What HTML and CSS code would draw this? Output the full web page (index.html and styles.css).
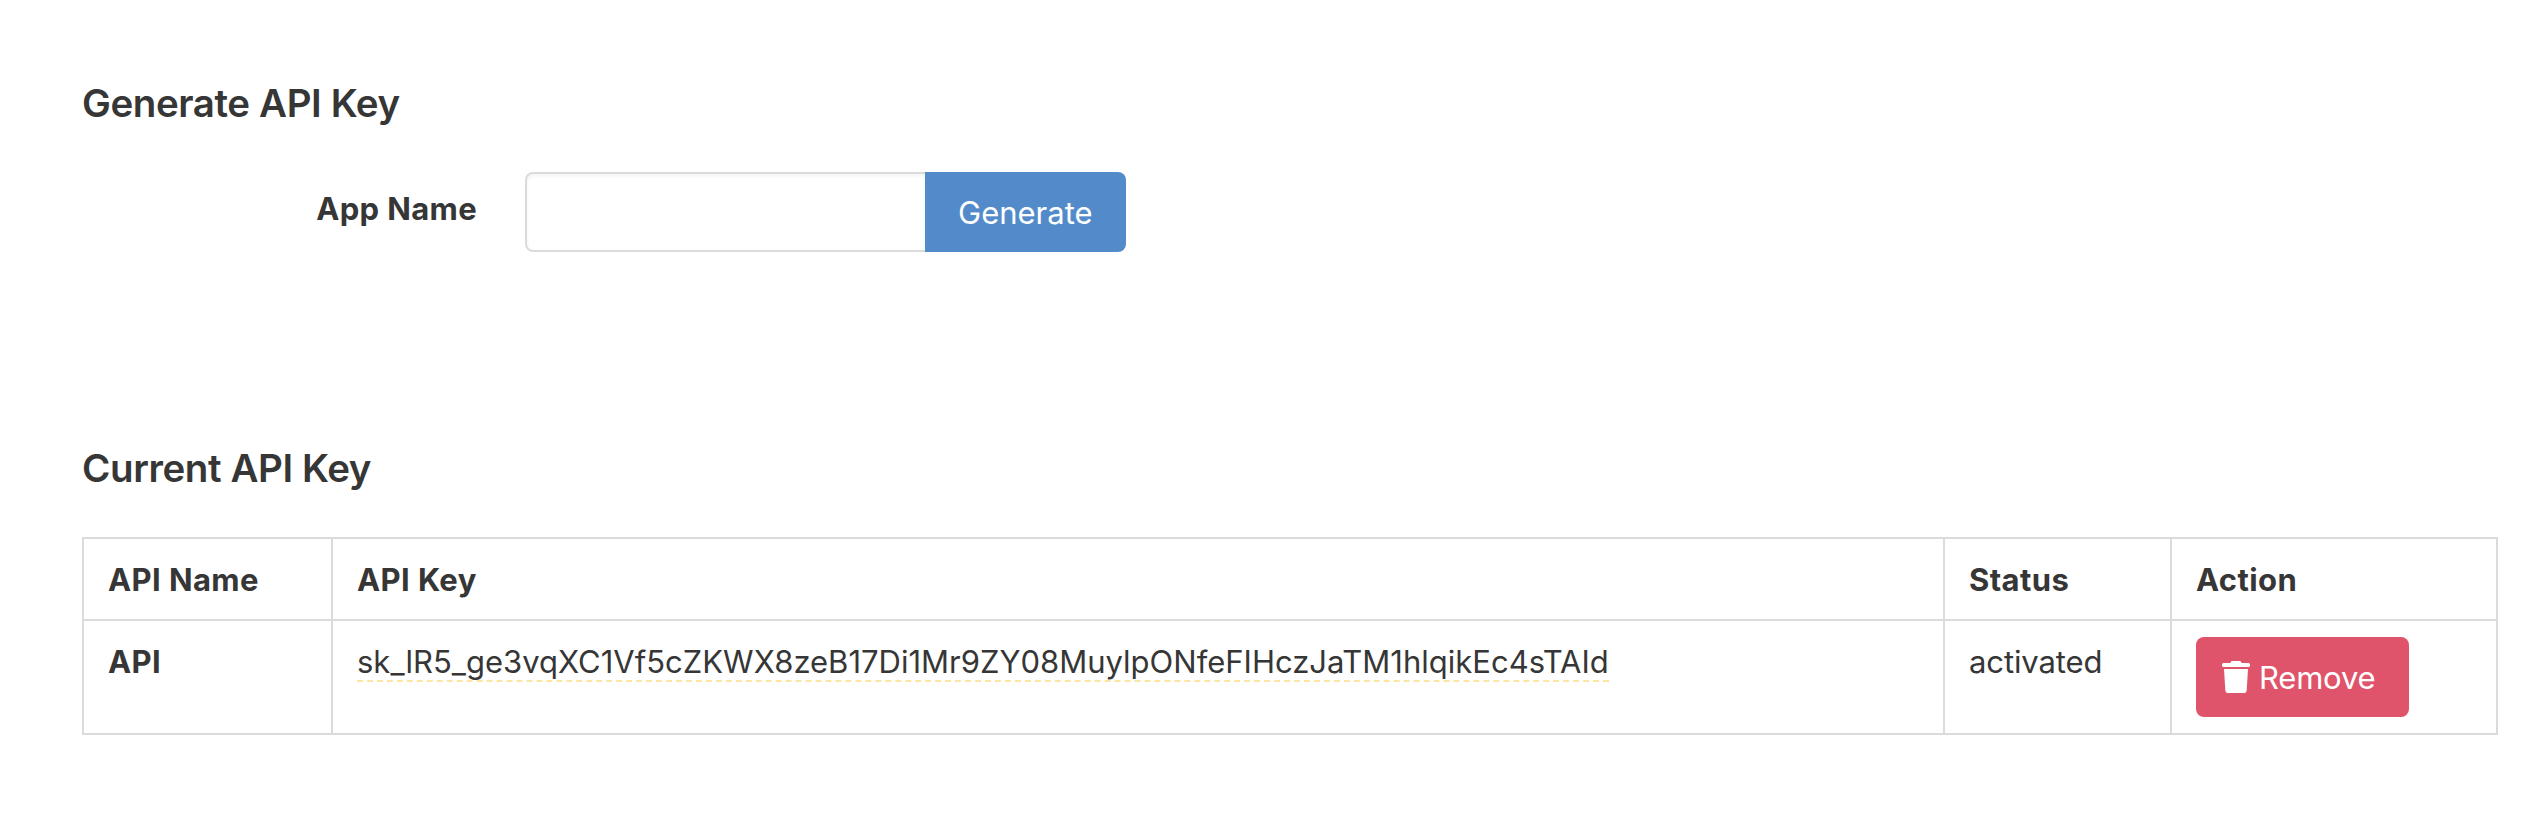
FILE: index.html
```html
<!DOCTYPE html>
<html lang="en">
<head>
<meta charset="utf-8">
<title>API Key</title>
<link rel="stylesheet" href="styles.css">
</head>
<body>
<main class="page">
  <section class="generate">
    <h2 class="title">Generate API Key</h2>
    <form class="field">
      <label class="label" for="app">App Name</label>
      <div class="addons">
        <input class="input" id="app" type="text">
        <button class="button primary" type="button"><span class="generate-text">Generate</span></button>
      </div>
    </form>
  </section>
  <section class="current">
    <h2 class="title">Current API Key</h2>
    <table class="table">
      <colgroup><col class="c-name"><col class="c-key"><col class="c-status"><col class="c-action"></colgroup>
      <thead>
        <tr><th>API Name</th><th>API Key</th><th>Status</th><th>Action</th></tr>
      </thead>
      <tbody>
        <tr class="row">
          <th>API</th>
          <td><span class="key">sk_lR5_ge3vqXC1Vf5cZKWX8zeB17Di1Mr9ZY08MuylpONfeFIHczJaTM1hlqikEc4sTAId</span></td>
          <td><span class="status">activated</span></td>
          <td><button class="button danger" type="button"><svg class="trash" viewBox="0 0 28 32" width="28" height="32"><path fill="#fff" d="M1.5 2H8.3L8.9.8Q9.3 0 10.2 0H17.800Q18.700 0 19.100.8L19.700 2H26.500Q28 2 28 3.500V4.500Q28 6 26.500 6H1.500Q0 6 0 4.500V3.500Q0 2 1.500 2ZM2 8H26L24.700 29.200Q24.500 32 21.700 32H6.300Q3.500 32 3.300 29.200Z"/></svg><span class="remove-text">Remove</span></button></td>
        </tr>
      </tbody>
    </table>
  </section>
</main>
</body>
</html>
```
FILE: styles.css
```css
* { box-sizing: border-box; }
body {
  margin: 0;
  background: #fff;
  color: #363636;
  font-family: Inter, "Liberation Sans", sans-serif;
  font-size: 31px;
  line-height: 48px;
}
.page { padding: 80px 28px 0 82px; }
.title { margin: 0; font-size: 38.5px; font-weight: 600; line-height: 46px; letter-spacing: -0.4px; }
.generate { height: 365px; }
.field { display: flex; margin-top: 46px; }
.label { width: 395px; padding-top: 13px; text-align: right; font-weight: 700; letter-spacing: 0.35px; }
.addons { display: flex; margin-left: 48px; }
.input {
  width: 400px; height: 80px; padding: 0 20px;
  border: 2px solid #dbdbdb; border-right: 0; border-radius: 8px 0 0 8px;
  background: #fff; box-shadow: inset 0 2px 4px rgba(10, 10, 10, .05);
  font: inherit; outline: 0;
}
.button {
  display: flex; align-items: center; height: 80px; padding: 0; border: 0;
  color: #fff; font: inherit; white-space: nowrap;
}
.generate-text, .remove-text { padding-top: 2px; }
.primary { width: 201px; padding-left: 33px; border-radius: 0 8px 8px 0; background: #538bca; }
.danger { width: 213px; padding-left: 26px; border-radius: 8px; background: #df546a; }
.trash { flex: none; margin-right: 9px; }
.remove-text { letter-spacing: -0.2px; }
.table { width: 2416px; margin-top: 46px; border-collapse: collapse; table-layout: fixed; }
.c-name { width: 249px; }
.c-key { width: 1612px; }
.c-status { width: 227px; }
.c-action { width: 326px; }
.table th, .table td { height: 82px; padding: 16px 24px; border: 2px solid #dbdbdb; text-align: left; vertical-align: top; }
.table th { padding-top: 17px; padding-bottom: 15px; font-weight: 700; letter-spacing: 0.4px; }
.table .row th, .table .row td { height: 114px; }
.key { display: inline-block; height: 45px; line-height: 50px; border-bottom: 2px dashed #fce6a2; white-space: nowrap; }
.status { display: inline-block; padding-top: 1px; letter-spacing: -0.1px; }
```
